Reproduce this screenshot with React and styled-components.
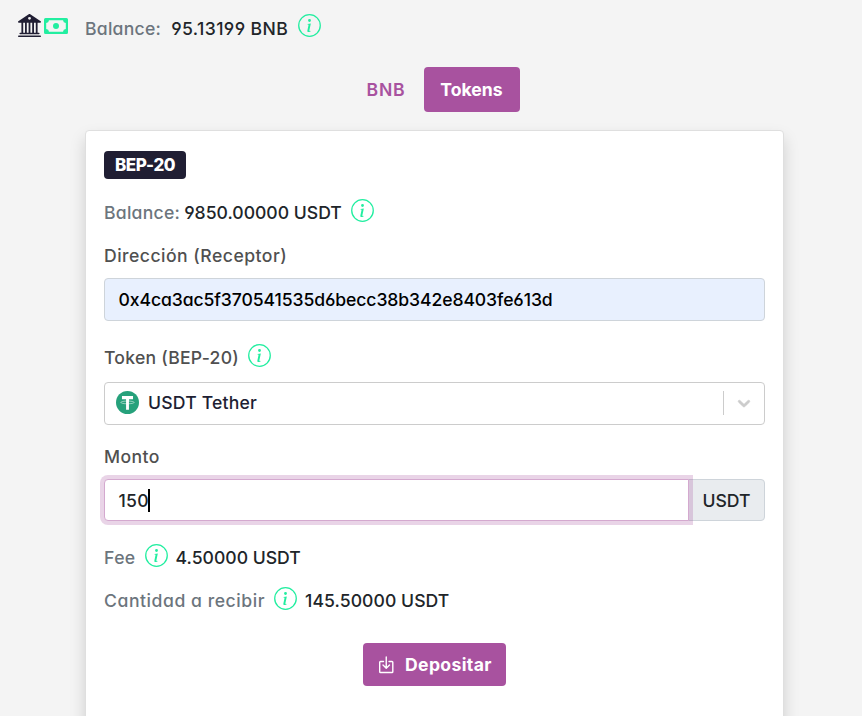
import React from "react";
import styled, { createGlobalStyle } from "styled-components";
import { BsBank2 } from "react-icons/bs";

const GlobalStyle = createGlobalStyle`
  *, *::before, *::after { box-sizing: border-box; }
  body {
    margin: 0;
    background: #f4f4f4;
    color: #212529;
    font: 500 17.6px/26px Inter, sans-serif;
    font-feature-settings: "cv11", "cv03", "cv04";
    overflow: hidden;
  }
  button { font-feature-settings: inherit; }
`;

const Page = styled.main`
  height: 716px;
  overflow: hidden;
`;

const TopBar = styled.header`
  display: flex;
  align-items: flex-start;
  height: 67px;
  padding: 14px 0 0 17px;
`;

const TopText = styled.div`
  display: flex;
  margin: 2px 0 0 17px;
`;

const Icon = styled.span`
  display: flex;
  flex: none;
  color: ${(p) => p.$color || "#22eea0"};
  margin: ${(p) => p.$margin || "0"};
`;

const Text = styled.span`
  color: ${(p) => p.$color || "#212529"};
  letter-spacing: ${(p) => p.$track || 0}px;
  margin-left: ${(p) => p.$gap || 0}px;
  white-space: nowrap;
`;

const Tabs = styled.nav`
  display: flex;
  justify-content: center;
  height: 63px;
  padding-left: 6px;
`;

const Tab = styled.button`
  height: 45px;
  width: ${(p) => p.$width}px;
  padding: 0;
  border: 0;
  border-radius: 4px;
  background: ${(p) => (p.$active ? "#a8529f" : "transparent")};
  color: ${(p) => (p.$active ? "#fff" : "#a8529f")};
  font: ${(p) => (p.$active ? 700 : 600)} 17.6px/26px Inter, sans-serif;
  letter-spacing: ${(p) => p.$track || 0}px;
`;

const Card = styled.section`
  width: 699px;
  height: 620px;
  margin-left: 85px;
  padding: 20px 18px;
  border: 1px solid #dfdfdf;
  border-radius: 4px;
  background: #fff;
  box-shadow: 0 8px 16px rgba(0, 0, 0, 0.15);
`;

const Badge = styled.div`
  display: flex;
  align-items: center;
  justify-content: center;
  width: 82px;
  height: 28px;
  border-radius: 4px;
  background: #201e33;
  color: #fff;
  font-size: 17px;
  font-weight: 800;
  letter-spacing: ${(p) => p.$track}px;
`;

const Line = styled.div`
  display: flex;
  height: 26px;
  margin-top: ${(p) => p.$top}px;
`;

const Field = styled.div`
  display: flex;
  align-items: center;
  height: 43px;
  margin-top: ${(p) => p.$top}px;
  padding-left: ${(p) => p.$pad || 13.5}px;
  padding-bottom: ${(p) => p.$lift || 0}px;
  border: 1px solid ${(p) => p.$border || "#ced4da"};
  border-radius: 4px;
  background: ${(p) => p.$fill || "#fff"};
`;

const Divider = styled.i`
  width: 1px;
  height: 24px;
  margin-left: auto;
  background: #ccc;
`;

const Chevron = styled.svg`
  width: 20px;
  height: 20px;
  margin: 1px 10px 0;
  fill: #ccc;
  stroke: #ccc;
  stroke-width: 0.6;
`;

const AmountGroup = styled.div`
  display: flex;
  height: 42px;
  margin-top: 9px;
`;

const AmountInput = styled.div`
  display: flex;
  align-items: center;
  width: 585px;
  padding: 2px 0 0 13.5px;
  border: 1px solid #d4a9cf;
  border-radius: 4px 0 0 4px;
  background: #fff;
  box-shadow: 0 0 0 4px rgba(168, 82, 159, 0.25);
  position: relative;
  z-index: 1;
`;

const Caret = styled.i`
  width: 2px;
  height: 23px;
  margin: -2px 0 0 -1px;
  background: #000;
`;

const Unit = styled.div`
  display: flex;
  align-items: center;
  justify-content: center;
  flex: 1;
  margin-left: -1px;
  padding-top: 2px;
  border: 1px solid #ced4da;
  border-radius: 0 4px 4px 0;
  background: #e9ecef;
`;

const Deposit = styled.button`
  display: flex;
  align-items: center;
  width: 143px;
  height: 43px;
  margin: 29px auto 0;
  padding: 0 0 0 15px;
  border: 0;
  border-radius: 4px;
  background: #a8529f;
  font: 700 17.6px/26px Inter, sans-serif;
`;

const Info = ({ margin }) => (
  <Icon $margin={margin}>
    <svg width="23" height="23" viewBox="0 0 16 16">
      <circle cx="8" cy="8" r="7.5" fill="none" stroke="currentColor" strokeWidth="0.9" />
      <path fill="currentColor" d="m8.93 6.588-2.29.287-.082.38.45.083c.294.07.352.176.288.469l-.738 3.468c-.194.897.105 1.319.808 1.319.545 0 1.178-.252 1.465-.598l.088-.416c-.2.176-.492.246-.686.246-.275 0-.375-.193-.304-.533zM9 4.5a1 1 0 1 1-2 0 1 1 0 0 1 2 0" />
    </svg>
  </Icon>
);

const Banknote = () => (
  <svg width="24" height="16" viewBox="0 0 24 16">
    <path
      fill="currentColor"
      fillRule="evenodd"
      d="M1.5 0h21A1.5 1.5 0 0 1 24 1.5v13a1.5 1.5 0 0 1-1.5 1.5h-21A1.5 1.5 0 0 1 0 14.500v-13A1.500 1.500 0 0 1 1.500 0ZM5 2.300A3 3 0 0 1 2.200 5v6A3 3 0 0 1 5 13.700h14A3 3 0 0 1 21.800 11V5A3 3 0 0 1 19 2.300Z"
    />
    <circle cx="12" cy="8" r="3" fill="currentColor" />
  </svg>
);

const DepositIcon = () => (
  <svg width="17" height="18" viewBox="0 0 17 18" fill="none" stroke="currentColor" strokeWidth="1.4" strokeLinecap="round" strokeLinejoin="round">
    <path d="M5.500 5.500H2.500a.8.8 0 0 0-.8.8v9.400a.8.8 0 0 0 .8.8h11.500a.8.8 0 0 0 .8-.8V6.300a.8.8 0 0 0-.8-.8H11M8.250 1v11M5 9l3.250 3.250L11.500 9" />
  </svg>
);

const Tether = () => (
  <svg width="23" height="23" viewBox="0 0 32 32">
    <circle cx="16" cy="16" r="16" fill="#26a17b" />
    <path fill="#fff" d="M14 13.900v-2.400H8.300V6.900h15.400v4.600h-5.500v2.400h-.2v12.200H14Z" />
    <ellipse cx="16" cy="15.900" rx="9.300" ry="1.900" fill="none" stroke="#fff" strokeWidth="0.700" />
  </svg>
);

export default function App() {
  return (
    <Page>
      <GlobalStyle />
      <TopBar>
        <Icon $color="#201e33" $margin="0 0 0 1px"><BsBank2 size={23} /></Icon>
        <Icon $margin="4px 0 0 3px"><Banknote /></Icon>
        <TopText>
          <Text $color="#6c757d" $track={0.25}>Balance:</Text>
          <Text $gap={10} $track={0.4}>95.13199 BNB</Text>
        </TopText>
        <Info margin="0 0 0 10px" />
      </TopBar>
      <Tabs>
        <Tab $width={75} $track={0.8}>BNB</Tab>
        <Tab $active $width={96}>Tokens</Tab>
      </Tabs>
      <Card>
        <Badge $track={-0.45}>BEP-20</Badge>
        <Line $top={21}>
          <Text $color="#6c757d" $track={0.25}>Balance:</Text>
          <Text $gap={4}>9850.00000 USDT</Text>
          <Info margin="-1px 0 0 9px" />
        </Line>
        <Line $top={17}><Text $color="#505050" $track={0.47}>Dirección (Receptor)</Text></Line>
        <Field $top={9} $fill="#e8f0fe">
          <Text $color="#000" $track={-0.1}>0x4ca3ac5f370541535d6becc38b342e8403fe613d</Text>
        </Field>
        <Line $top={24}>
          <Text $color="#505050" $track={0.25}>Token (BEP-20)</Text>
          <Info margin="-1px 0 0 9px" />
        </Line>
        <Field $top={11} $border="#ccc" $pad={11} $lift={2}>
          <Tether />
          <Text $gap={9} $track={0.2} $color="#201e33">USDT Tether</Text>
          <Divider />
          <Chevron viewBox="0 0 20 20">
            <path d="M4.516 7.548c.436-.446 1.043-.481 1.576 0L10 11.295l3.908-3.747c.533-.481 1.141-.446 1.574 0 .436.445.408 1.197 0 1.615-.406.418-4.695 4.502-4.695 4.502a1.095 1.095 0 0 1-1.576 0S4.924 9.581 4.516 9.163s-.436-1.170 0-1.615z" />
          </Chevron>
        </Field>
        <Line $top={19}><Text $color="#505050" $track={0.4}>Monto</Text></Line>
        <AmountGroup>
          <AmountInput><Text $track={0.3}>150</Text><Caret /></AmountInput>
          <Unit><Text>USDT</Text></Unit>
        </AmountGroup>
        <Line $top={24}>
          <Text $color="#6c757d" $track={0.4}>Fee</Text>
          <Info margin="-1px 0 0 9px" />
          <Text $gap={8}>4.50000 USDT</Text>
        </Line>
        <Line $top={17}>
          <Text $color="#6c757d" $track={0.55}>Cantidad a recibir</Text>
          <Info margin="-1px 0 0 9px" />
          <Text $gap={8} $track={0.06}>145.50000 USDT</Text>
        </Line>
        <Deposit>
          <Icon $color="#fff"><DepositIcon /></Icon>
          <Text $color="#fff" $gap={10} $track={0.35}>Depositar</Text>
        </Deposit>
      </Card>
    </Page>
  );
}
